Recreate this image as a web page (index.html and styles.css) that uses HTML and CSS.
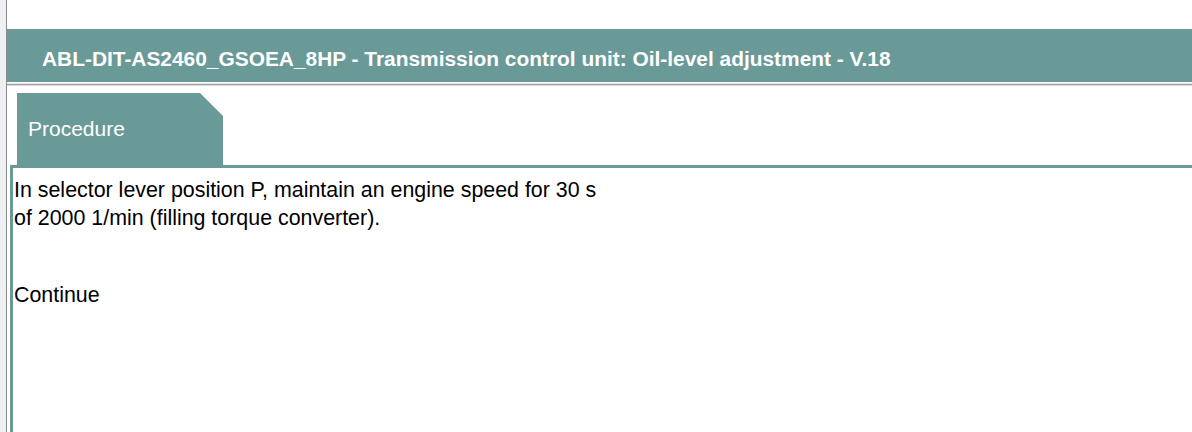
FILE: index.html
```html
<!DOCTYPE html>
<html>
<head>
<meta charset="utf-8">
<link rel="stylesheet" href="styles.css">
</head>
<body>
<div class="app">
  <div class="sidebar"></div>
  <div class="main">
    <div class="title-bar">ABL-DIT-AS2460_GSOEA_8HP - Transmission control unit: Oil-level adjustment - V.18</div>
    <div class="separator"></div>
    <div class="tabs">
      <div class="tab">Procedure</div>
    </div>
    <div class="panel">
      <p class="line">In selector lever position P, maintain an engine speed for 30 s</p>
      <p class="line">of 2000 1/min (filling torque converter).</p>
      <p class="line continue">Continue</p>
    </div>
  </div>
</div>
</body>
</html>
```

FILE: styles.css
```css
html, body {
  margin: 0;
  padding: 0;
  background: #ffffff;
  font-family: "Liberation Sans", Arial, sans-serif;
}
.app {
  display: flex;
  height: 432px;
  overflow: hidden;
}
.sidebar {
  width: 6px;
  flex: none;
  background: #eef0f4;
  border-right: 1px solid #8c8c8c;
}
.main {
  flex: 1;
  display: flex;
  flex-direction: column;
  padding-top: 29px;
}
.title-bar {
  height: 53px;
  box-sizing: border-box;
  padding-top: 6px;
  background: #699a98;
  color: #ffffff;
  font-weight: bold;
  font-size: 20.9px;
  line-height: 47px;
  padding-left: 35px;
  white-space: nowrap;
}
.separator {
  margin-top: 2px;
  height: 1px;
  background: #a4a4a4;
  box-shadow: 0 1px 0 #d8d8d8, 0 -1px 0 #e4e4e4;
}
.tabs {
  display: flex;
  padding-left: 10px;
  margin-top: 8px;
}
.tab {
  width: 206px;
  height: 72px;
  background: #699a98;
  color: #ffffff;
  font-size: 21px;
  padding-left: 11px;
  box-sizing: border-box;
  display: flex;
  align-items: center;
  clip-path: polygon(0 0, 183px 0, 206px 23px, 206px 100%, 0 100%);
}
.panel {
  flex: 1;
  margin-left: 3px;
  border-top: 3px solid #699a98;
  border-left: 3px solid #699a98;
  padding: 8px 0 0 1px;
  font-size: 21.4px;
  color: #000000;
}
.line {
  margin: 0;
  line-height: 28px;
}
.continue {
  margin-top: 49px;
}
```
